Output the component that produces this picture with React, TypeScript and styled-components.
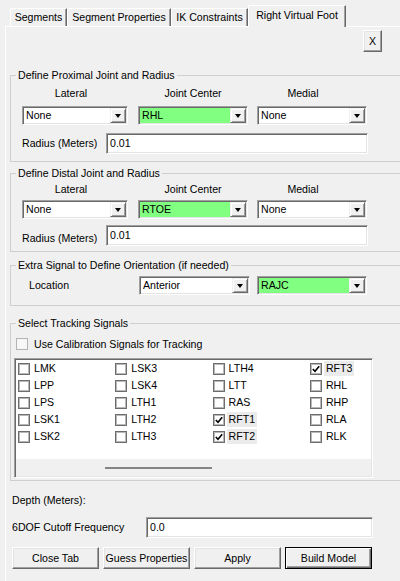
import React from "react";
import styled, { createGlobalStyle } from "styled-components";

const GlobalStyle = createGlobalStyle`
	html, body {
		margin: 0;
		padding: 0;
		background: #f0f0f0;
	}
	body {
		width: 400px;
		height: 581px;
		overflow: hidden;
		font-family: "Liberation Sans", Arial, sans-serif;
		font-size: 10.6px;
		color: #000;
	}
	* {
		box-sizing: border-box;
	}
`;

const Window = styled.div`
	padding-top: 5px;
	height: 581px;
`;

const TabStrip = styled.div`
	display: flex;
	align-items: flex-end;
	height: 21px;
	padding-left: 10px;
	position: relative;
	z-index: 1;
`;

const Tab = styled.div<{ $w: number; $active?: boolean }>`
	width: ${(p) => p.$w}px;
	height: ${(p) => (p.$active ? 22 : 18)}px;
	margin-bottom: ${(p) => (p.$active ? -1 : 0)}px;
	background: #f0f0f0;
	border-top: 1px solid #fff;
	border-left: 1px solid #fff;
	border-right: 1px solid #696969;
	box-shadow: inset -1px 0 0 #a0a0a0;
	text-align: center;
	line-height: ${(p) => (p.$active ? 18 : 16)}px;
	white-space: nowrap;
`;

const Panel = styled.div`
	margin-left: 5px;
	width: 410px;
	height: 560px;
	border-top: 1px solid #fff;
	border-left: 1px solid #fff;
`;

const CloseRow = styled.div`
	padding: 3px 0 0 357px;
`;

const RaisedButton = styled.button<{ $w: number; $default?: boolean }>`
	width: ${(p) => p.$w}px;
	height: 22px;
	padding: 0;
	margin: 0;
	font: inherit;
	color: #000;
	background: #f0f0f0;
	border: 1px solid;
	border-color: ${(p) =>
		p.$default ? "#000" : "#fff #696969 #696969 #fff"};
	box-shadow: ${(p) =>
		p.$default
			? "inset 1px 1px 0 #fff, inset -1px -1px 0 #696969, inset -2px -2px 0 #a0a0a0"
			: "inset -1px -1px 0 #a0a0a0, inset 1px 1px 0 #e3e3e3"};
	text-align: center;
	white-space: nowrap;
`;

const Group = styled.fieldset<{ $mt: number; $pb: number }>`
	margin: ${(p) => p.$mt}px 0 0 4px;
	padding: 0 0 ${(p) => p.$pb}px 0;
	width: 400px;
	min-inline-size: 0;
	border: 1px solid #cfcfcf;
`;

const Legend = styled.legend`
	margin-left: 5px;
	padding: 0 2px;
	line-height: 12px;
`;

const ColumnLabels = styled.div<{ $mt: number }>`
	display: grid;
	grid-template-columns: 106px 110px 110px;
	column-gap: 10px;
	margin: ${(p) => p.$mt}px 0 0 11px;
	line-height: 13px;
`;

const ColumnLabel = styled.div<{ $nudge?: number }>`
	text-align: center;
	padding-right: ${(p) => p.$nudge ?? 0}px;
`;

const ComboRow = styled.div<{ $mt: number }>`
	display: flex;
	gap: 10px;
	margin: ${(p) => p.$mt}px 0 0 11px;
	& > :last-child {
		margin-left: -1px;
	}
`;

const Sunken = styled.div<{ $w: number; $h: number }>`
	width: ${(p) => p.$w}px;
	height: ${(p) => p.$h}px;
	border: 1px solid;
	border-color: #a0a0a0 #fff #fff #a0a0a0;
	padding: 1px;
	box-shadow: inset 1px 1px 0 #696969, inset -1px -1px 0 #e3e3e3;
	background: #fff;
	display: flex;
`;

const ComboValue = styled.div<{ $green?: boolean }>`
	flex: 1;
	background: ${(p) => (p.$green ? "#80ff80" : "#fff")};
	padding-left: 2px;
	line-height: 15px;
	white-space: nowrap;
	overflow: hidden;
`;

const DropButton = styled.div`
	width: 16px;
	height: 100%;
	background: #f0f0f0;
	border: 1px solid;
	border-color: #f0f0f0 #696969 #696969 #f0f0f0;
	box-shadow: inset 1px 1px 0 #fff, inset -1px -1px 0 #a0a0a0;
	display: flex;
	align-items: center;
	justify-content: center;
	&::after {
		content: "";
		border-left: 3.5px solid transparent;
		border-right: 3.5px solid transparent;
		border-top: 4px solid #000;
		margin-top: 1px;
	}
`;

const TextValue = styled.div`
	padding-left: 2px;
	line-height: 17px;
	white-space: nowrap;
`;

const FieldRow = styled.div<{ $mt: number; $ml: number; $label: number }>`
	display: flex;
	align-items: center;
	margin: ${(p) => p.$mt}px 0 0 ${(p) => p.$ml}px;
	& > span {
		width: ${(p) => p.$label}px;
		line-height: 13px;
		white-space: nowrap;
	}
`;

const LocationRow = styled.div`
	display: flex;
	align-items: center;
	margin: 5px 0 0 18px;
	gap: 7px;
	& > span {
		width: 103px;
		line-height: 13px;
	}
`;

const CalibrationRow = styled.label`
	display: flex;
	align-items: center;
	gap: 6px;
	height: 13px;
	margin: 8px 0 0 5px;
	white-space: nowrap;
`;

const FlatBox = styled.span`
	width: 12px;
	height: 12px;
	border: 1px solid #b4b4b4;
	background: #f7f7f7;
`;

const SignalList = styled.div`
	width: 359px;
	height: 120px;
	margin: 8px 0 0 3px;
	border: 1px solid;
	border-color: #a0a0a0 #fff #fff #a0a0a0;
	padding: 1px;
	box-shadow: inset 1px 1px 0 #696969, inset -1px -1px 0 #e3e3e3;
	background: #fff;
	display: flex;
	flex-direction: column;
`;

const SignalGrid = styled.div`
	flex: 1;
	display: grid;
	grid-auto-flow: column;
	grid-template-rows: repeat(5, 17px);
	grid-template-columns: repeat(4, 97.3px);
	align-content: start;
	padding-left: 2px;
`;

const Signal = styled.div`
	display: flex;
	align-items: center;
`;

const SignalBox = styled.span`
	width: 12px;
	height: 12px;
	border: 1px solid #6d6d6d;
	box-shadow: inset 0 0 0 1px #b8b8b8;
	background: #fff;
	display: flex;
	align-items: center;
	justify-content: center;
`;

const SignalName = styled.span<{ $checked?: boolean }>`
	margin-left: 2px;
	padding: 0 2px;
	line-height: 15px;
	background: ${(p) => (p.$checked ? "#ebebeb" : "transparent")};
`;

const ScrollTrack = styled.div`
	height: 17px;
	background: #f0f0f0;
	display: flex;
	align-items: center;
	padding-left: 89px;
`;

const ScrollThumb = styled.div`
	width: 107px;
	height: 2px;
	background: #858585;
`;

const PlainLabel = styled.div<{ $mt: number }>`
	margin: ${(p) => p.$mt}px 0 0 6px;
	line-height: 13px;
`;

const ButtonRow = styled.div`
	display: flex;
	gap: 4px;
	margin: 9px 0 0 6px;
`;

const Check = () => (
	<svg width="8" height="8" viewBox="0 0 8 8">
		<path d="M0.8 4 L3 6.3 L7.2 1.2" fill="none" stroke="#000" strokeWidth="1.6" />
	</svg>
);

const Dropdown = ({ w, value, green }: { w: number; value: string; green?: boolean }) => (
	<Sunken $w={w} $h={19}>
		<ComboValue $green={green}>{value}</ComboValue>
		<DropButton />
	</Sunken>
);

const JointGroup = ({
	title,
	center,
	compact,
	mt,
}: {
	title: string;
	center: string;
	compact?: boolean;
	mt: number;
}) => (
	<Group $mt={mt} $pb={compact ? 5 : 7}>
		<Legend>{title}</Legend>
		<ColumnLabels $mt={compact ? 4 : 6}>
			<ColumnLabel $nudge={8}>Lateral</ColumnLabel>
			<ColumnLabel>Joint Center</ColumnLabel>
			<ColumnLabel $nudge={20}>Medial</ColumnLabel>
		</ColumnLabels>
		<ComboRow $mt={compact ? 4 : 6}>
			<Dropdown w={106} value="None" />
			<Dropdown w={110} value={center} green />
			<Dropdown w={110} value="None" />
		</ComboRow>
		<FieldRow $mt={compact ? 6 : 8} $ml={11} $label={84}>
			<span style={compact ? { marginTop: 6 } : undefined}>Radius (Meters)</span>
			<Sunken $w={262} $h={21}>
				<TextValue>0.01</TextValue>
			</Sunken>
		</FieldRow>
	</Group>
);

const signals: { name: string; checked?: boolean }[] = [
	{ name: "LMK" },
	{ name: "LPP" },
	{ name: "LPS" },
	{ name: "LSK1" },
	{ name: "LSK2" },
	{ name: "LSK3" },
	{ name: "LSK4" },
	{ name: "LTH1" },
	{ name: "LTH2" },
	{ name: "LTH3" },
	{ name: "LTH4" },
	{ name: "LTT" },
	{ name: "RAS" },
	{ name: "RFT1", checked: true },
	{ name: "RFT2", checked: true },
	{ name: "RFT3", checked: true },
	{ name: "RHL" },
	{ name: "RHP" },
	{ name: "RLA" },
	{ name: "RLK" },
];

const tabs = [
	{ label: "Segments", w: 57 },
	{ label: "Segment Properties", w: 104 },
	{ label: "IK Constraints", w: 77 },
	{ label: "Right Virtual Foot", w: 98, active: true },
];

const App = () => {
	return (
		<Window>
			<GlobalStyle />
			<TabStrip>
				{tabs.map((t) => (
					<Tab key={t.label} $w={t.w} $active={t.active}>
						{t.label}
					</Tab>
				))}
			</TabStrip>
			<Panel>
				<CloseRow>
					<RaisedButton $w={19}>X</RaisedButton>
				</CloseRow>
				<JointGroup title="Define Proximal Joint and Radius" center="RHL" mt={17} />
				<JointGroup title="Define Distal Joint and Radius" center="RTOE" compact mt={5} />
				<Group $mt={7} $pb={10}>
					<Legend>Extra Signal to Define Orientation (if needed)</Legend>
					<LocationRow>
						<span>Location</span>
						<Dropdown w={111} value="Anterior" />
						<Dropdown w={110} value="RAJC" green />
					</LocationRow>
				</Group>
				<Group $mt={11} $pb={2}>
					<Legend>Select Tracking Signals</Legend>
					<CalibrationRow>
						<FlatBox />
						Use Calibration Signals for Tracking
					</CalibrationRow>
					<SignalList>
						<SignalGrid>
							{signals.map((s) => (
								<Signal key={s.name}>
									<SignalBox>{s.checked && <Check />}</SignalBox>
									<SignalName $checked={s.checked}>{s.name}</SignalName>
								</Signal>
							))}
						</SignalGrid>
						<ScrollTrack>
							<ScrollThumb />
						</ScrollTrack>
					</SignalList>
				</Group>
				<PlainLabel $mt={13}>Depth (Meters):</PlainLabel>
				<FieldRow $mt={10} $ml={6} $label={134}>
					<span>6DOF Cutoff Frequency</span>
					<Sunken $w={227} $h={21}>
						<TextValue>0.0</TextValue>
					</Sunken>
				</FieldRow>
				<ButtonRow>
					<RaisedButton $w={87}>Close Tab</RaisedButton>
					<RaisedButton $w={87}>Guess Properties</RaisedButton>
					<RaisedButton $w={87}>Apply</RaisedButton>
					<RaisedButton $w={87} $default>
						Build Model
					</RaisedButton>
				</ButtonRow>
			</Panel>
		</Window>
	);
};

export default App;
